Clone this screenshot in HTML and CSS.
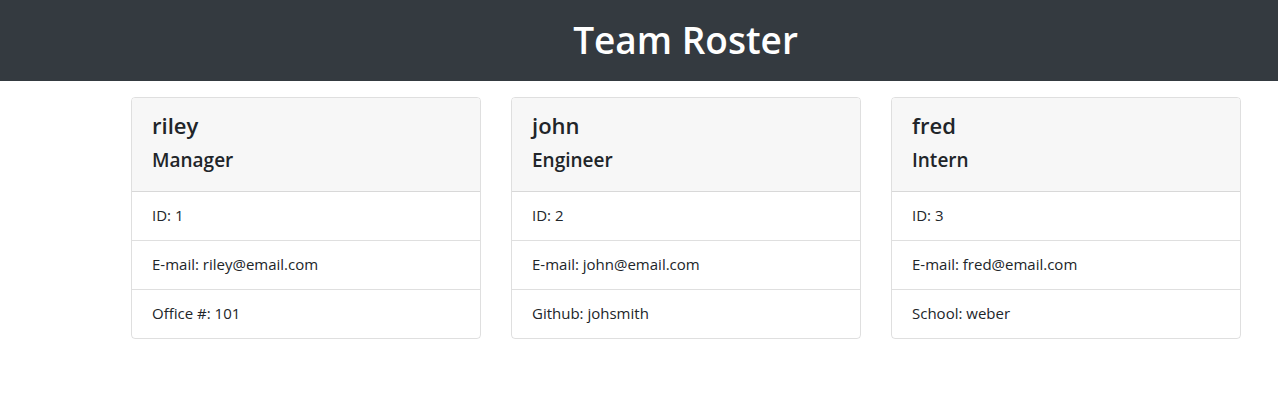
FILE: index.html
```html
<!DOCTYPE html>
<html lang="en">
<head>
<meta charset="utf-8">
<title>Team Roster</title>
<link rel="stylesheet" href="styles.css">
</head>
<body>
<header class="navbar">
  <h1 class="brand">Team Roster</h1>
</header>
<main class="roster">
  <div class="card">
    <div class="card-header">
      <h2 class="name">riley</h2>
      <h3 class="role">Manager</h3>
    </div>
    <ul class="list">
      <li class="item">ID: 1</li>
      <li class="item">E-mail: riley@email.com</li>
      <li class="item">Office #: 101</li>
    </ul>
  </div>
  <div class="card">
    <div class="card-header">
      <h2 class="name">john</h2>
      <h3 class="role">Engineer</h3>
    </div>
    <ul class="list">
      <li class="item">ID: 2</li>
      <li class="item">E-mail: john@email.com</li>
      <li class="item">Github: johsmith</li>
    </ul>
  </div>
  <div class="card">
    <div class="card-header">
      <h2 class="name">fred</h2>
      <h3 class="role">Intern</h3>
    </div>
    <ul class="list">
      <li class="item">ID: 3</li>
      <li class="item">E-mail: fred@email.com</li>
      <li class="item">School: weber</li>
    </ul>
  </div>
</main>
</body>
</html>
```
FILE: styles.css
```css
* { box-sizing: border-box; }
body {
  margin: 0;
  font-family: "Open Sans", "Noto Sans", sans-serif;
  font-size: 16px;
  line-height: 1.5;
  color: #212529;
  background: #fff;
}
.navbar {
  background: #343a40;
  height: 81px;
  display: flex;
  align-items: center;
  justify-content: center;
  padding-left: 93px;
  padding-bottom: 1px;
}
.brand {
  margin: 0;
  color: #fff;
  font-size: 37px;
  font-weight: 600;
  line-height: 1.2;
}
.roster {
  display: flex;
  gap: 30px;
  margin: 16px 0 0 131px;
  width: 1110px;
}
.card {
  width: 350px;
  border: 1px solid rgba(0,0,0,.125);
  border-radius: 4px;
  overflow: hidden;
}
.card-header {
  background: #f7f7f7;
  padding: 13px 20px 11px;
  border-bottom: 1px solid rgba(0,0,0,.125);
}
.name {
  margin: 0 0 8px;
  font-size: 22px;
  font-weight: 600;
  line-height: 28.8px;
}
.role {
  margin: 0 0 8px;
  font-size: 19px;
  font-weight: 600;
  line-height: 24px;
}
.list {
  list-style: none;
  margin: 0;
  padding: 0;
}
.item {
  padding: 12px 20px;
  font-size: 15px;
  border-top: 1px solid rgba(0,0,0,.125);
  height: 49px;
}
.item:first-child { border-top: 0; height: 48px; }
```
